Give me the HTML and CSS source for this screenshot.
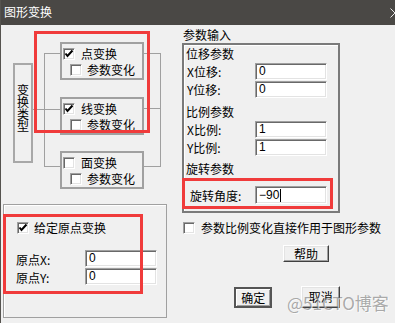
FILE: index.html
```html
<!DOCTYPE html>
<html lang="zh-CN">
<head>
    <meta charset="UTF-8">
    <title>图形变换</title>
    <link rel="stylesheet" href="styles.css">
</head>
<body>
    <div class="window">
        <div class="titlebar">
            <span class="title">图形变换</span>
            <svg class="close" width="10" height="10" viewBox="0 0 10 10">
                <path d="M0.5 0.5 L9.5 9.5 M0.5 9.5 L9.5 0.5" stroke="#e8e8e8" stroke-width="1" fill="none"/>
            </svg>
        </div>

        <div class="main">
            <div class="left">
                <div class="top">
                    <div class="type-box"><span>变换类型</span></div>

                    <div class="tree">
                        <div class="group">
                            <div class="row"><span class="check"><svg width="10" height="10" viewBox="0 0 10 10"><polyline points="1.5,4.5 3.5,7 8.5,1.5" fill="none" stroke="#000" stroke-width="2"/></svg></span>点变换</div>
                            <div class="row sub"><span class="check"></span>参数变化</div>
                        </div>
                        <div class="group middle">
                            <div class="row"><span class="check"><svg width="10" height="10" viewBox="0 0 10 10"><polyline points="1.5,4.5 3.5,7 8.5,1.5" fill="none" stroke="#000" stroke-width="2"/></svg></span>线变换</div>
                            <div class="row sub"><span class="check"></span>参数变化</div>
                        </div>
                        <div class="group last">
                            <div class="row"><span class="check"></span>面变换</div>
                            <div class="row sub"><span class="check"></span>参数变化</div>
                        </div>
                    </div>
                </div>

                <div class="origin">
                    <div class="row"><span class="check"><svg width="10" height="10" viewBox="0 0 10 10"><polyline points="1.5,4.5 3.5,7 8.5,1.5" fill="none" stroke="#000" stroke-width="2"/></svg></span>给定原点变换</div>
                    <div class="field-row first"><span class="label">原点X:</span><div class="field">0</div></div>
                    <div class="field-row"><span class="label">原点Y:</span><div class="field">0</div></div>
                </div>
            </div>

            <div class="right">
                <div class="caption">参数输入</div>
                <div class="frame">
                    <div class="section">位移参数</div>
                    <div class="field-row"><span class="label">X位移:</span><div class="field">0</div></div>
                    <div class="field-row"><span class="label">Y位移:</span><div class="field">0</div></div>

                    <div class="section gap">比例参数</div>
                    <div class="field-row"><span class="label">X比例:</span><div class="field">1</div></div>
                    <div class="field-row"><span class="label">Y比例:</span><div class="field">1</div></div>

                    <div class="section gap-sm">旋转参数</div>
                    <div class="field-row angle"><span class="label">旋转角度:</span><div class="field">−90<span class="caret"></span></div></div>
                </div>

                <div class="row direct"><span class="check"></span>参数比例变化直接作用于图形参数</div>
                <button class="btn help">帮助</button>
                <div class="actions">
                    <button class="btn default">确定</button>
                    <button class="btn cancel">取消</button>
                </div>
            </div>
        </div>

        <!-- красные рамки-пометки поверх окна -->
        <div class="mark mark-type"></div>
        <div class="mark mark-origin"></div>
        <div class="mark mark-angle"></div>

        <div class="watermark">@51CTO博客</div>
    </div>
</body>
</html>
```

FILE: styles.css
```css
:root {
    --face: #f0f0f0;
    --title-bg: #4a4845;
    --line: #a0a0a0;
    --shadow: #696969;
    --mark: #f03b3b;
}

* {
    box-sizing: border-box;
}

body {
    margin: 0;
    background: var(--face);
    font-family: "Noto Sans CJK SC", "Noto Sans", sans-serif;
    font-size: 12px;
    color: #000;
}

.window {
    position: relative;
    width: 395px;
    height: 323px;
    border-left: 1px solid #55534f;
    overflow: hidden;
}

.titlebar {
    position: relative;
    height: 25px;
    background: var(--title-bg);
    color: #fff;
    padding-left: 3px;
    line-height: 24px;
}

.close {
    position: absolute;
    right: -5px;
    top: 8px;
}

.main {
    display: flex;
    height: 298px;
}

.left {
    width: 169px;
}

.top {
    display: flex;
    height: 179px;
    padding-left: 12px;
}

.type-box {
    width: 20px;
    height: 100px;
    margin-top: 38px;
    border: 2px solid #a8a8a8;
    display: flex;
    justify-content: center;
    padding-top: 19px;
}

.type-box span {
    width: 12px;
    line-height: 12px;
}

.tree {
    position: relative;
    width: 117px;
    margin-left: 11px;
    margin-top: 17px;
    padding-left: 16px;
}

.tree::before {
    content: "";
    position: absolute;
    left: 0;
    right: 0;
    top: 11px;
    height: 114px;
    border-left: 1px solid var(--line);
    border-right: 1px solid var(--line);
}

.group {
    position: relative;
    width: 84px;
    height: 38px;
    border: 2px solid var(--line);
    padding: 2px 0 0 1px;
    background: var(--face);
}

.group.middle {
    margin-top: 17px;
}

.group.last {
    margin-top: 16px;
}

.group::before,
.group::after {
    content: "";
    position: absolute;
    top: 9px;
    border-top: 1px solid var(--line);
}

.group::before {
    left: -18px;
    width: 16px;
}

.group::after {
    right: -19px;
    width: 17px;
}

.group.middle::before {
    left: -29px;
    width: 27px;
    top: 10px;
}

.group.last::before,
.group.last::after {
    top: 13px;
}

.row {
    display: flex;
    align-items: center;
    height: 16px;
    line-height: 16px;
    white-space: nowrap;
}

.row .check {
    margin-right: 6px;
}

.row.sub {
    padding-left: 7px;
}

.row.sub .check {
    margin-right: 5px;
}

.check {
    flex: none;
    width: 12px;
    height: 12px;
    background: #fff;
    border: 1px solid;
    border-color: var(--line) #fff #fff var(--line);
    box-shadow: inset 1px 1px 0 var(--shadow), inset -1px -1px 0 #e3e3e3;
    display: flex;
}

.check svg {
    margin: 0;
}

.origin {
    margin-left: 2px;
    width: 164px;
    height: 114px;
    border: 1px solid var(--line);
    box-shadow: inset 1px 1px 0 #fff;
    padding: 15px 0 0 13px;
}

.origin .row .check {
    margin-right: 5px;
}

.field-row {
    display: flex;
    align-items: flex-end;
    height: 18px;
}

.origin .field-row {
    margin-left: -1px;
}

.origin .field-row.first {
    margin-top: 14px;
}

.origin .field-row .field {
    margin-bottom: 1px;
}

.label {
    width: 69px;
    line-height: 17px;
    white-space: nowrap;
}

.field {
    width: 72px;
    height: 17px;
    background: #fff;
    border: 1px solid;
    border-color: var(--line) #fff #fff var(--line);
    box-shadow: inset 1px 1px 0 var(--shadow), inset -1px -1px 0 #e3e3e3;
    padding-left: 3px;
    line-height: 15px;
    font-family: "Liberation Sans", sans-serif;
    display: flex;
    align-items: center;
}

.right {
    margin-left: 12px;
    width: 158px;
}

.caption {
    margin-top: 2px;
    padding-left: 1px;
    line-height: 16px;
}

.frame {
    width: 158px;
    height: 170px;
    border: 2px solid #7a7a7a;
    box-shadow: inset 1px 1px 0 #fff;
    padding: 1px 0 0 2px;
}

.section {
    line-height: 16px;
}

.section.gap {
    margin-top: 6px;
}

.section.gap-sm {
    margin-top: 5px;
}

.frame .label {
    padding-left: 1px;
}

.frame .field-row .field {
    margin-top: 1px;
}

.frame .field-row.angle {
    margin-top: 9px;
}

.frame .field-row.angle .label {
    padding-left: 4px;
}

.frame .field-row.angle .field {
    height: 18px;
}

.caret {
    width: 1px;
    height: 13px;
    margin-left: 1px;
    background: #000;
}

.direct {
    margin-top: 7px;
    padding-left: 1px;
}

.btn {
    display: block;
    padding: 0;
    font: inherit;
    color: #000;
    background: var(--face);
    border: 1px solid;
    border-color: #fff #404040 #404040 #fff;
    box-shadow: inset -1px -1px 0 var(--line), inset 1px 1px 0 #e3e3e3;
    line-height: 14px;
}

.help {
    margin-top: 9px;
    margin-left: 101px;
    width: 46px;
    height: 17px;
}

.actions {
    display: flex;
    align-items: flex-start;
    margin-top: 24px;
}

.default {
    margin-top: 1px;
    margin-left: 52px;
    width: 47px;
    height: 21px;
    border: 2px solid #555;
    box-shadow: inset 1px 1px 0 #fff, inset -1px -1px 0 var(--line);
}

.cancel {
    margin-left: 29px;
    width: 48px;
    height: 22px;
}

.mark {
    position: absolute;
    border: 3px solid var(--mark);
}

.mark-type {
    left: 33px;
    top: 31px;
    width: 116px;
    height: 102px;
}

.mark-origin {
    left: 2px;
    top: 214px;
    width: 140px;
    height: 80px;
}

.mark-angle {
    left: 181px;
    top: 178px;
    width: 151px;
    height: 31px;
}

.watermark {
    position: absolute;
    left: 286px;
    top: 293px;
    font-size: 17px;
    line-height: 20px;
    color: rgba(105, 105, 105, 0.55);
    text-shadow: 1px 1px 0 rgba(255, 255, 255, 0.7);
    white-space: nowrap;
}
```
